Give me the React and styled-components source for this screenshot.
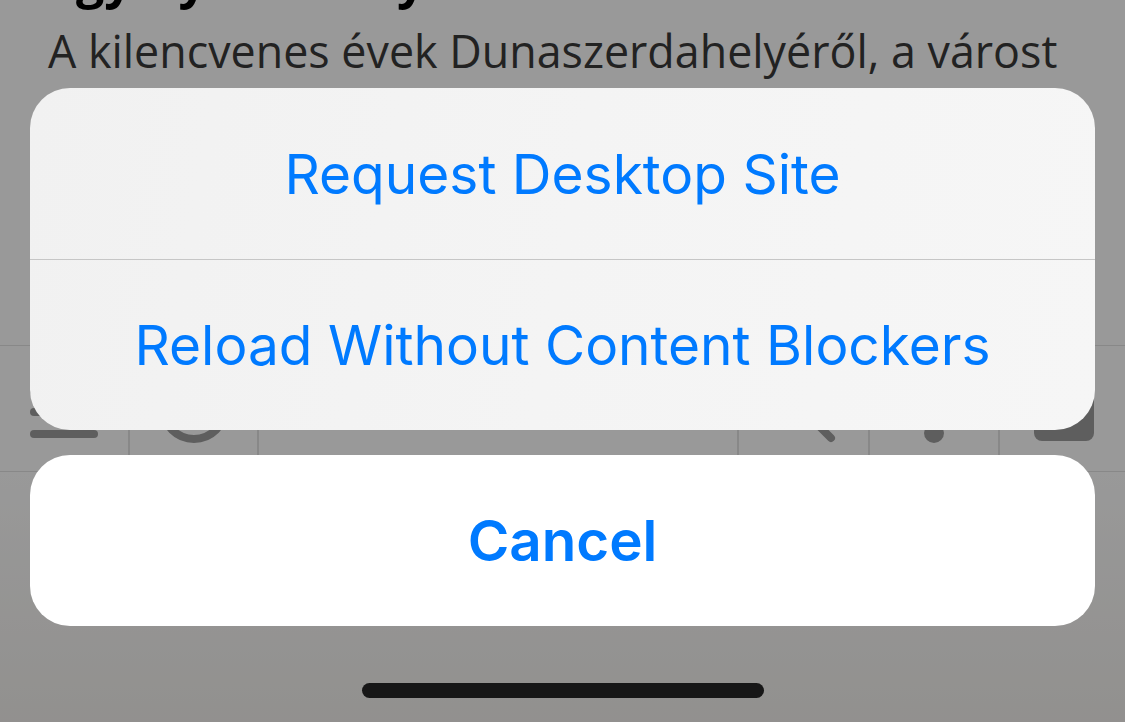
import React from 'react'
import styled, { createGlobalStyle } from 'styled-components'

const GlobalStyle = createGlobalStyle`
  body {
    margin: 0;
    background: #999;
  }
`

const Screen = styled.div`
  position: relative;
  width: 1125px;
  height: 722px;
  overflow: hidden;
  background: #ffffff;
  font-family: "Open Sans", "Liberation Sans", sans-serif;
`

const Article = styled.article`
  height: 345px;
  padding: 0 48px;
  box-sizing: border-box;
  overflow: hidden;
`

const Heading = styled.h1`
  margin: -51px 0 0 0;
  font-size: 50px;
  line-height: 60px;
  font-weight: 700;
  color: #000;
  white-space: nowrap;
`

const Paragraph = styled.p`
  margin: 6px 0 0 0;
  font-size: 44.8px;
  line-height: 72px;
  color: #3a3a3a;
`

const Toolbar = styled.nav`
  display: grid;
  grid-template-columns: 128px 129px 480px 131px 130px 127px;
  height: 127px;
  border-top: 1px solid #e3e3e3;
  border-bottom: 1px solid #e3e3e3;
  box-sizing: border-box;
`

const ToolCell = styled.div`
  display: flex;
  align-items: center;
  justify-content: center;
  border-left: ${p => (p.first ? 'none' : '2px solid #e3e3e3')};
  color: #9d9d9d;
`

const Lower = styled.div`
  height: 250px;
  background: linear-gradient(180deg, #ffffff 0%, #f3f1ee 100%);
`

const Dim = styled.div`
  position: absolute;
  inset: 0;
  background: rgba(0, 0, 0, 0.4);
  display: flex;
  flex-direction: column;
  padding: 88px 30px 0;
  box-sizing: border-box;
  font-family: Inter, "Liberation Sans", sans-serif;
`

const Group = styled.div`
  border-radius: 40px;
  overflow: hidden;
  background: ${p => (p.cancel ? '#ffffff' : 'linear-gradient(100deg, #f1f1f1 0%, #f4f4f4 50%, #f6f6f6 100%)')};
  margin-top: ${p => (p.cancel ? '25px' : '0')};
`

const SheetButton = styled.button`
  display: block;
  width: 100%;
  height: ${p => p.h}px;
  border: none;
  background: transparent;
  color: #007aff;
  font-family: inherit;
  font-size: ${p => (p.bold ? 56.5 : 55)}px;
  font-weight: ${p => (p.bold ? 600 : 400)};
  padding: 0;
  cursor: pointer;
`

const Separator = styled.div`
  height: 1px;
  background: #c6c6c6;
`

const HomeBar = styled.div`
  align-self: center;
  width: 402px;
  height: 15px;
  margin-top: 57px;
  border-radius: 8px;
  background: #171717;
`

const ListIcon = () => (
  <svg width="70" height="70" viewBox="0 0 70 70" fill="none" stroke="currentColor" strokeWidth="8" strokeLinecap="round">
    <path d="M5 17 H65" />
    <path d="M5 38 H65" />
    <path d="M5 60 H65" />
  </svg>
)

const RingIcon = () => (
  <svg width="70" height="70" viewBox="0 0 70 70" fill="none" stroke="currentColor" strokeWidth="8">
    <circle cx="35" cy="34" r="31" />
  </svg>
)

const SearchIcon = () => (
  <svg width="70" height="70" viewBox="0 0 70 70" fill="none" stroke="currentColor" strokeWidth="8" strokeLinecap="round">
    <circle cx="28" cy="29" r="21" />
    <path d="M44 46 L62 64" />
  </svg>
)

const DotIcon = () => (
  <svg width="70" height="70" viewBox="0 0 70 70" fill="currentColor">
    <circle cx="35" cy="59" r="10" />
    <rect x="29" y="8" width="12" height="36" rx="6" />
  </svg>
)

const TabsIcon = () => (
  <svg width="70" height="70" viewBox="0 0 70 70" fill="currentColor">
    <rect x="6" y="10" width="60" height="57" rx="8" />
  </svg>
)

const App = () => {
  return (
    <>
      <GlobalStyle />
      <Screen>
        <Article>
          <Heading>Egy nyár amely örökre szól</Heading>
          <Paragraph>
            A kilencvenes évek Dunaszerdahelyéről, a várost és lakóit bemutató
            fényképek gyűjteménye a régi időkből, amelyeket olvasóink küldtek be.
          </Paragraph>
        </Article>
        <Toolbar>
          <ToolCell first><ListIcon /></ToolCell>
          <ToolCell><RingIcon /></ToolCell>
          <ToolCell />
          <ToolCell><SearchIcon /></ToolCell>
          <ToolCell><DotIcon /></ToolCell>
          <ToolCell><TabsIcon /></ToolCell>
        </Toolbar>
        <Lower />
        <Dim>
          <Group>
            <SheetButton h={171}>Request Desktop Site</SheetButton>
            <Separator />
            <SheetButton h={170}>Reload Without Content Blockers</SheetButton>
          </Group>
          <Group cancel>
            <SheetButton h={171} bold>Cancel</SheetButton>
          </Group>
          <HomeBar />
        </Dim>
      </Screen>
    </>
  )
}

export default App
